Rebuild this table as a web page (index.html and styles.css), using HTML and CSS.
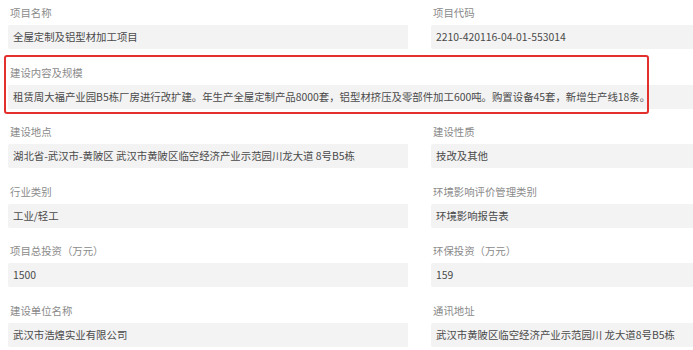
FILE: index.html
```html
<!DOCTYPE html>
<html lang="zh-CN">
<head>
<meta charset="utf-8">
<title>项目信息</title>
<link rel="stylesheet" href="styles.css">
</head>
<body>
<div class="form">
  <div class="row">
    <div class="field"><div class="label">项目名称</div><div class="value">全屋定制及铝型材加工项目</div></div>
    <div class="field"><div class="label">项目代码</div><div class="value">2210-420116-04-01-553014</div></div>
  </div>
  <div class="row wide">
    <div class="field full"><div class="label">建设内容及规模</div><div class="value">租赁周大福产业园B5栋厂房进行改扩建。年生产全屋定制产品8000套，铝型材挤压及零部件加工600吨。购置设备45套，新增生产线18条。</div></div>
    <div class="mark"></div>
  </div>
  <div class="row">
    <div class="field"><div class="label">建设地点</div><div class="value">湖北省-武汉市-黄陂区 武汉市黄陂区临空经济产业示范园川龙大道 8号B5栋</div></div>
    <div class="field"><div class="label">建设性质</div><div class="value">技改及其他</div></div>
  </div>
  <div class="row">
    <div class="field"><div class="label">行业类别</div><div class="value">工业/轻工</div></div>
    <div class="field"><div class="label">环境影响评价管理类别</div><div class="value">环境影响报告表</div></div>
  </div>
  <div class="row">
    <div class="field"><div class="label">项目总投资（万元）</div><div class="value">1500</div></div>
    <div class="field"><div class="label">环保投资（万元）</div><div class="value">159</div></div>
  </div>
  <div class="row">
    <div class="field"><div class="label">建设单位名称</div><div class="value">武汉市浩煌实业有限公司</div></div>
    <div class="field"><div class="label">通讯地址</div><div class="value">武汉市黄陂区临空经济产业示范园川 龙大道8号B5栋</div></div>
  </div>
</div>
</body>
</html>
```
FILE: styles.css
```css
html, body {
  margin: 0;
  padding: 0;
  background: #ffffff;
  overflow: hidden;
}
body {
  font-family: "Noto Sans CJK SC", "Microsoft YaHei", "Noto Sans", sans-serif;
  font-size: 10.4px;
}
.form {
  display: flex;
  flex-direction: column;
  gap: 15.6px;
  padding: 5px 0 0 8px;
}
.row {
  display: grid;
  grid-template-columns: 400px 1fr;
  column-gap: 23px;
}
.row.wide {
  position: relative;
}
.field {
  min-width: 0;
}
.field.full {
  grid-column: 1 / 3;
}
.label {
  height: 16px;
  line-height: 16px;
  margin-bottom: 4px;
  padding-left: 2px;
  color: #8a8a8a;
  white-space: nowrap;
}
.value {
  height: 24px;
  line-height: 24px;
  padding-left: 5px;
  background: #f3f3f3;
  color: #4a4a4a;
  border-radius: 2px 0 0 2px;
  white-space: nowrap;
  overflow: hidden;
}
.mark {
  position: absolute;
  left: -4px;
  top: -10px;
  width: 641px;
  height: 55px;
  border: 2.5px solid #e3302c;
  border-radius: 3px;
  pointer-events: none;
}
```
